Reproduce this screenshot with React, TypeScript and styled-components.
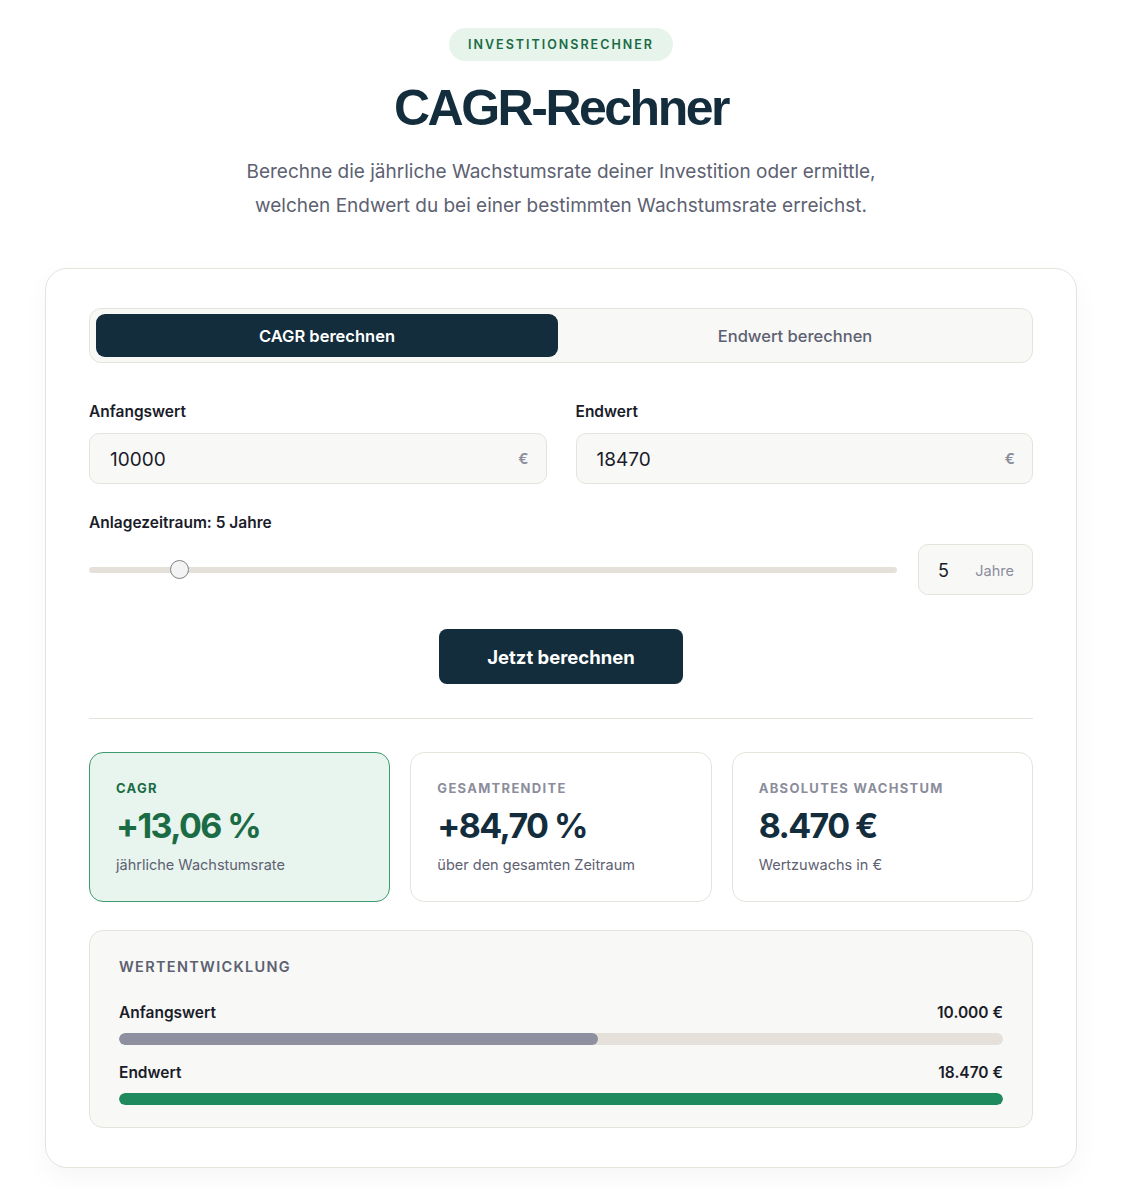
import styled, { createGlobalStyle } from "styled-components";

const navy = "#132d3d";
const line = "#e6e3dd";
const soft = "#f8f8f6";
const muted = "#5d6171";
const faint = "#8c8d9c";
const green = "#1b6b45";

const GlobalStyle = createGlobalStyle`
  body {
    margin: 0;
    background: #ffffff;
    font-family: Inter, "Open Sans", Arial, sans-serif;
    color: #1a1c2a;
  }
  * { box-sizing: border-box; }
`;

const Page = styled.main`
  padding: 28px 4px 20px 0;
`;

const Header = styled.header`
  display: flex;
  flex-direction: column;
  align-items: center;
  text-align: center;
`;

const Badge = styled.span`
  height: 33px;
  line-height: 33px;
  padding: 0 19px;
  border-radius: 999px;
  background: #e6f4ec;
  color: ${green};
  font-size: 12.5px;
  font-weight: 600;
  letter-spacing: 2px;
`;

const Title = styled.h1`
  margin: 20px 0 0;
  font-family: "Liberation Sans", Arial, sans-serif;
  font-size: 50px;
  line-height: 55px;
  font-weight: 700;
  letter-spacing: -0.05em;
  color: ${navy};
`;

const Lead = styled.p`
  margin: 19px 0 0;
  max-width: 700px;
  font-size: 19px;
  line-height: 34px;
  color: ${muted};
`;

const Card = styled.section`
  width: 1032px;
  margin: 45px auto 0;
  padding: 39px 43px 39px;
  border: 1px solid ${line};
  border-radius: 22px;
  background: #fff;
  box-shadow: 0 10px 28px rgba(20, 30, 40, 0.04);
`;

const Tabs = styled.div`
  display: grid;
  grid-template-columns: 1fr 1fr;
  gap: 6px;
  padding: 5px 6px;
  border: 1px solid ${line};
  border-radius: 12px;
  background: ${soft};
`;

const Tab = styled.button<{ active?: boolean }>`
  height: 43px;
  border: none;
  border-radius: 9px;
  background: ${({ active }) => (active ? navy : "transparent")};
  color: ${({ active }) => (active ? "#fff" : muted)};
  font-family: inherit;
  font-size: 16.5px;
  font-weight: ${({ active }) => (active ? 600 : 500)};
  cursor: pointer;
`;

const FieldGrid = styled.div`
  display: grid;
  grid-template-columns: 1fr 1fr;
  gap: 29px;
  margin-top: 38px;
`;

const Field = styled.label`
  display: flex;
  flex-direction: column;
  gap: 10px;
`;

const Label = styled.span`
  font-size: 15.5px;
  line-height: 22px;
  font-weight: 600;
  color: #1a1c2a;
`;

const InputBox = styled.div`
  display: flex;
  align-items: center;
  height: 51px;
  padding: 0 17px 0 20px;
  border: 1px solid ${line};
  border-radius: 10px;
  background: ${soft};
`;

const Input = styled.input`
  flex: 1;
  min-width: 0;
  border: none;
  outline: none;
  background: transparent;
  font-family: inherit;
  font-size: 19px;
  color: #1a1c2a;
  padding: 0;
  margin-top: 1px;
`;

const Suffix = styled.span`
  font-size: 15px;
  font-weight: 600;
  color: ${faint};
`;

const PeriodBlock = styled.div`
  display: flex;
  flex-direction: column;
  gap: 10px;
  margin-top: 28px;
`;

const SliderRow = styled.div`
  display: flex;
  align-items: center;
  gap: 21px;
`;

const Range = styled.input`
  flex: 1;
  appearance: none;
  -webkit-appearance: none;
  height: 6px;
  margin: 0;
  border-radius: 3px;
  background: #e5e1da;
  outline: none;

  &::-webkit-slider-thumb {
    -webkit-appearance: none;
    width: 19px;
    height: 19px;
    border-radius: 50%;
    background: #f3f3f3;
    border: 1px solid #7f8088;
    cursor: pointer;
  }
  &::-moz-range-thumb {
    width: 19px;
    height: 19px;
    border-radius: 50%;
    background: #f3f3f3;
    border: 1px solid #7f8088;
  }
`;

const YearsBox = styled.div`
  display: flex;
  align-items: center;
  width: 115px;
  height: 51px;
  padding: 0 18px 0 19px;
  border: 1px solid ${line};
  border-radius: 10px;
  background: ${soft};
`;

const YearsInput = styled(Input)`
  width: 30px;
  flex: none;
  font-size: 18px;
`;

const YearsUnit = styled.span`
  margin-left: auto;
  margin-top: 1px;
  font-size: 14.5px;
  color: ${faint};
`;

const Submit = styled.button`
  display: block;
  width: 244px;
  height: 55px;
  margin: 34px auto 0;
  border: none;
  border-radius: 8px;
  background: ${navy};
  color: #fff;
  font-family: inherit;
  font-size: 18.5px;
  font-weight: 700;
  cursor: pointer;
`;

const Divider = styled.hr`
  margin: 34px 0 0;
  border: none;
  border-top: 1px solid ${line};
`;

const Results = styled.div`
  display: grid;
  grid-template-columns: repeat(3, 1fr);
  gap: 20px;
  margin-top: 33px;
`;

const ResultCard = styled.div<{ highlight?: boolean }>`
  padding: 27px 26px 26px;
  border: 1px solid ${({ highlight }) => (highlight ? "#3c9a6e" : line)};
  border-radius: 14px;
  background: ${({ highlight }) => (highlight ? "#e8f4ee" : "#fff")};
`;

const ResultLabel = styled.div<{ highlight?: boolean }>`
  font-size: 13px;
  line-height: 16px;
  font-weight: 700;
  letter-spacing: 1.3px;
  text-transform: uppercase;
  color: ${({ highlight }) => (highlight ? green : faint)};
`;

const ResultValue = styled.div<{ highlight?: boolean }>`
  margin-top: 10px;
  font-size: 34px;
  line-height: 40px;
  font-weight: 700;
  letter-spacing: -1.6px;
  color: ${({ highlight }) => (highlight ? green : navy)};
`;

const ResultNote = styled.div`
  margin-top: 9px;
  font-size: 14.5px;
  line-height: 20px;
  color: ${muted};
`;

const Growth = styled.div`
  margin-top: 28px;
  padding: 27px 29px 22px;
  border: 1px solid ${line};
  border-radius: 14px;
  background: ${soft};
`;

const GrowthTitle = styled.div`
  font-size: 14.5px;
  line-height: 18px;
  font-weight: 600;
  letter-spacing: 1.3px;
  color: ${muted};
`;

const BarRow = styled.div`
  margin-top: 26px;

  & + & {
    margin-top: 17px;
  }
`;

const BarHead = styled.div`
  display: flex;
  justify-content: space-between;
  font-size: 15.5px;
  line-height: 22px;
  font-weight: 600;
  color: #1a1c2a;
`;

const Track = styled.div`
  height: 12px;
  margin-top: 9px;
  border-radius: 6px;
  background: #e5e1da;
  overflow: hidden;
`;

const Fill = styled.div<{ color: string }>`
  height: 100%;
  border-radius: 6px;
  background: ${({ color }) => color};
`;

const start = 10000;
const end = 18470;

export default function App() {
  return (
    <Page>
      <GlobalStyle />
      <Header>
        <Badge>INVESTITIONSRECHNER</Badge>
        <Title>CAGR-Rechner</Title>
        <Lead>
          Berechne die jährliche Wachstumsrate deiner Investition oder ermittle,
          welchen Endwert du bei einer bestimmten Wachstumsrate erreichst.
        </Lead>
      </Header>

      <Card>
        <Tabs>
          <Tab active>CAGR berechnen</Tab>
          <Tab>Endwert berechnen</Tab>
        </Tabs>

        <FieldGrid>
          <Field>
            <Label>Anfangswert</Label>
            <InputBox>
              <Input defaultValue="10000" />
              <Suffix>€</Suffix>
            </InputBox>
          </Field>
          <Field>
            <Label>Endwert</Label>
            <InputBox>
              <Input defaultValue="18470" />
              <Suffix>€</Suffix>
            </InputBox>
          </Field>
        </FieldGrid>

        <PeriodBlock>
          <Label>Anlagezeitraum: 5 Jahre</Label>
          <SliderRow>
            <Range type="range" min={1} max={40} defaultValue={5} />
            <YearsBox>
              <YearsInput defaultValue="5" />
              <YearsUnit>Jahre</YearsUnit>
            </YearsBox>
          </SliderRow>
        </PeriodBlock>

        <Submit>Jetzt berechnen</Submit>
        <Divider />

        <Results>
          <ResultCard highlight>
            <ResultLabel highlight>CAGR</ResultLabel>
            <ResultValue highlight>+13,06 %</ResultValue>
            <ResultNote>jährliche Wachstumsrate</ResultNote>
          </ResultCard>
          <ResultCard>
            <ResultLabel>Gesamtrendite</ResultLabel>
            <ResultValue>+84,70 %</ResultValue>
            <ResultNote>über den gesamten Zeitraum</ResultNote>
          </ResultCard>
          <ResultCard>
            <ResultLabel>Absolutes Wachstum</ResultLabel>
            <ResultValue>8.470 €</ResultValue>
            <ResultNote>Wertzuwachs in €</ResultNote>
          </ResultCard>
        </Results>

        <Growth>
          <GrowthTitle>WERTENTWICKLUNG</GrowthTitle>
          <BarRow>
            <BarHead>
              <span>Anfangswert</span>
              <span>10.000 €</span>
            </BarHead>
            <Track>
              <Fill color="#8e8f9f" style={{ width: `${(start / end) * 100}%` }} />
            </Track>
          </BarRow>
          <BarRow>
            <BarHead>
              <span>Endwert</span>
              <span>18.470 €</span>
            </BarHead>
            <Track>
              <Fill color="#1e8a5e" style={{ width: "100%" }} />
            </Track>
          </BarRow>
        </Growth>
      </Card>
    </Page>
  );
}
